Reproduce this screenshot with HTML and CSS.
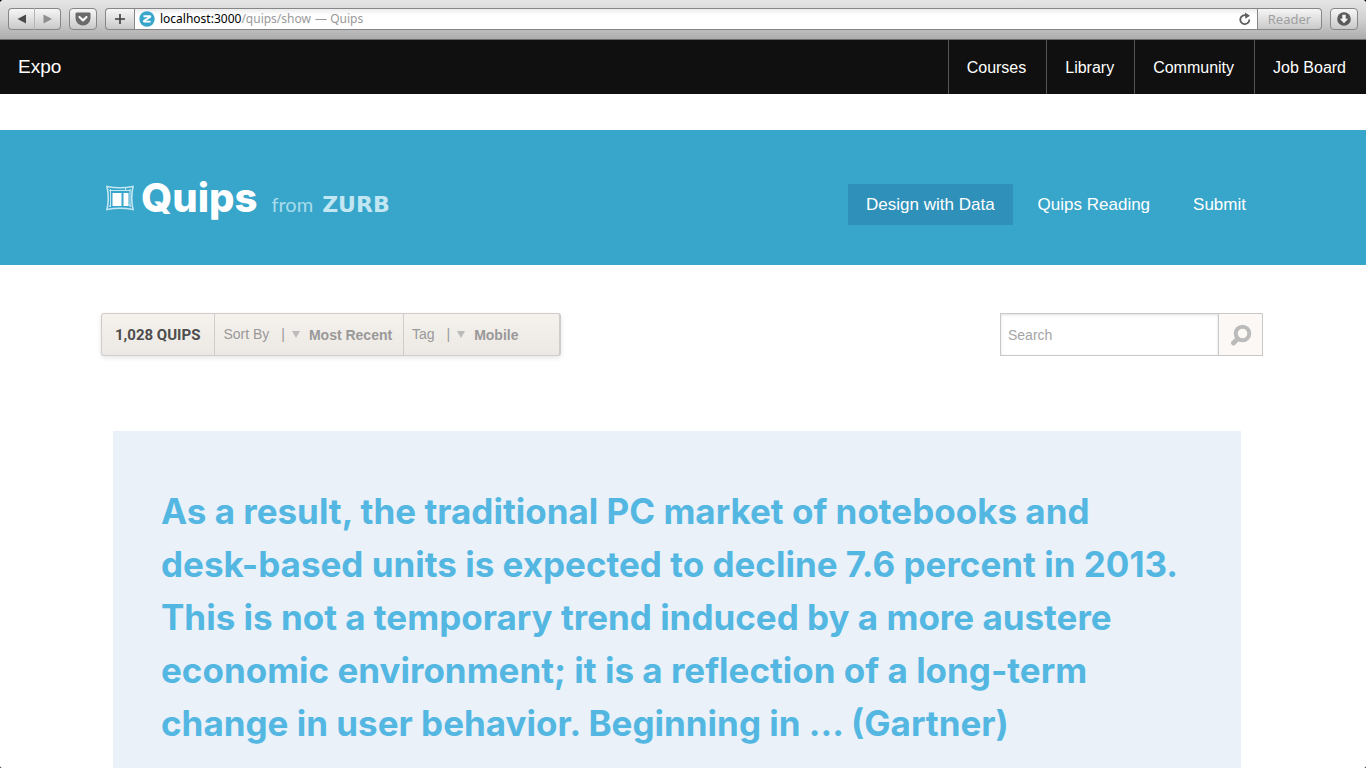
FILE: index.html
```html
<!DOCTYPE html>
<html lang="en">
<head>
<meta charset="utf-8">
<title>Quips</title>
<link rel="stylesheet" href="styles.css">
</head>
<body>
<div class="window">
  <div class="chrome">
    <div class="btn-group">
      <button class="chrome-btn nav-btn back" aria-label="Back"><svg width="10" height="10" viewBox="0 0 10 10"><path d="M0.5 5L9 0.5v9z" fill="#4a4a4a"/></svg></button>
      <button class="chrome-btn nav-btn forward" aria-label="Forward"><svg width="10" height="10" viewBox="0 0 10 10"><path d="M9 5L0.5 0.5v9z" fill="#8e8e8e"/></svg></button>
    </div>
    <button class="chrome-btn pocket" aria-label="Save to Pocket"><svg width="16" height="14" viewBox="0 0 16 14"><path d="M1.500 0.500h13l1 1v4.500a7.500 7.500 0 0 1-15 0V1.500z" fill="#6a6a6a"/><path d="M4.500 5L8 8.400 11.500 5" fill="none" stroke="#f4f4f4" stroke-width="2.200" stroke-linecap="round" stroke-linejoin="round"/></svg></button>
    <div class="address-bar">
      <button class="chrome-btn add" aria-label="Add bookmark"><svg width="12" height="12" viewBox="0 0 12 12"><path d="M6 1v10M1 6h10" stroke="#3c3c3c" stroke-width="1.600"/></svg></button>
      <div class="address">
        <svg width="16" height="16" viewBox="0 0 16 16"><circle cx="8" cy="8" r="7.700" fill="#38a6ca"/><path d="M4.500 5.200h6.200q1.200 0 .3.900L5.200 9.700q-.9.900.4.900h6" fill="none" stroke="#fff" stroke-width="1.900"/></svg>
        <p class="url"><span class="host">localhost:3000</span>/quips/show <span class="page-title">— Quips</span></p>
        <button class="reload" aria-label="Reload"><svg width="12" height="14" viewBox="0 0 12 14"><path d="M10.300 7.500A4.500 4.500 0 1 1 7.500 3.500" fill="none" stroke="#5e5e5e" stroke-width="1.800"/><path d="M6 0.500L11 3.800 6.300 6.800z" fill="#5e5e5e"/></svg></button>
      </div>
      <button class="chrome-btn reader" disabled>Reader</button>
    </div>
    <button class="chrome-btn downloads" aria-label="Downloads"><svg width="14" height="14" viewBox="0 0 14 14"><circle cx="7" cy="7" r="6.800" fill="#5a5a5a"/><path d="M5.300 2.700h3.400v4h2.500L7 11.300 2.800 6.700h2.500z" fill="#f2f2f2"/></svg></button>
  </div>

  <nav class="topbar">
    <a class="brand" href="#">Expo</a>
    <ul class="top-links">
      <li><a href="#">Courses</a></li>
      <li><a href="#">Library</a></li>
      <li><a href="#">Community</a></li>
      <li><a href="#">Job Board</a></li>
    </ul>
  </nav>

  <header class="banner">
    <a class="logo" href="#">
      <svg class="logo-mark" width="28" height="26" viewBox="0 0 28 26"><g fill="none" stroke="#c3e7f2"><path d="M1 1.500Q14 4 27 1.500Q24.500 13 27 24.500Q14 22 1 24.500Q3.500 13 1 1.500z" stroke-width="1.600"/><path d="M3 5.500h22M4.500 4v18M24 4v18M3 22l2-3M25 22l-2-3M19.500 3v3" stroke-width="1"/></g><path d="M6.500 8h9v13h-9zM17.500 8h5v13h-5z" fill="#fff"/></svg>
      <span class="logo-name">Quips</span>
      <span class="logo-from">from</span>
      <span class="logo-zurb">ZURB</span>
    </a>
    <nav class="sections">
      <a class="current" href="#">Design with Data</a>
      <a href="#">Quips Reading</a>
      <a href="#">Submit</a>
    </nav>
  </header>

  <main>
    <div class="tools">
      <div class="filters">
        <strong class="count">1,028 QUIPS</strong>
        <div class="filter sort">
          <label for="sort">Sort By</label>
          <span class="bar">|</span>
          <i class="caret"></i>
          <select id="sort"><option>Most Recent</option></select>
        </div>
        <div class="filter">
          <label for="tag">Tag</label>
          <span class="bar">|</span>
          <i class="caret"></i>
          <select id="tag"><option>Mobile</option></select>
        </div>
      </div>
      <form class="search">
        <input type="search" placeholder="Search" aria-label="Search quips">
        <button type="submit" aria-label="Search"><svg width="22" height="22" viewBox="0 0 22 22"><circle cx="12.500" cy="9.500" r="6.800" fill="none" stroke="#bbb" stroke-width="4"/><path d="M7.500 15L3.500 19" stroke="#bbb" stroke-width="4.800" stroke-linecap="round"/></svg></button>
      </form>
    </div>
    <blockquote class="quip">As a result, the traditional PC market of notebooks and<br>desk-based units is expected to decline 7.6 percent in 2013.<br>This is not a temporary trend induced by a more austere<br>economic environment; it is a reflection of a long-term<br>change in user behavior. Beginning in ... (Gartner)</blockquote>
  </main>
</div>
</body>
</html>
```
FILE: styles.css
```css
* { box-sizing: border-box; }

html { background: #000; }

body {
  margin: 0;
  font-family: "Liberation Sans", Arial, sans-serif;
}

a { color: inherit; text-decoration: none; }

button, input, select { font: inherit; margin: 0; }

svg { display: block; flex: none; }

.window {
  display: flex;
  flex-direction: column;
  min-height: 100vh;
  background: #fff;
  border-radius: 4px 4px 2px 2px;
  overflow: hidden;
}

/* Browser toolbar */
.chrome {
  display: flex;
  align-items: center;
  gap: 8px;
  height: 40px;
  padding: 0 8px 2px;
  background: linear-gradient(#e6e6e6, #d0d0d0 50%, #acacac);
  border-bottom: 1px solid #6c6c6c;
}

.btn-group, .address-bar { display: flex; }

.chrome-btn {
  display: flex;
  align-items: center;
  justify-content: center;
  height: 22px;
  padding: 0;
  border: 1px solid #868686;
  border-radius: 4px;
  background: linear-gradient(#f6f6f6, #c9c9c9);
}

.back { width: 26px; border-right: 0; border-radius: 4px 0 0 4px; }
.forward { width: 27px; border-left-color: #b4b4b4; border-radius: 0 4px 4px 0; }
.pocket, .downloads { width: 28px; }

.address-bar { flex: 1; }

.add { width: 29px; border-right: 0; border-radius: 4px 0 0 4px; }

.address {
  display: flex;
  flex: 1;
  align-items: center;
  gap: 5px;
  height: 22px;
  padding: 0 6px 0 4px;
  background: linear-gradient(#ececec, #fff 6px);
  border: 1px solid #868686;
}

.url {
  flex: 1;
  margin: 0;
  font: 12px/18px "Noto Sans", sans-serif;
  color: #999;
}

.host { color: #000; }
.page-title { margin-left: 1px; font-size: 12px; }

.reload { padding: 0; border: 0; background: none; }

.reader {
  width: 64px;
  border-left: 0;
  border-radius: 0 4px 4px 0;
  font: 13px/18px "Noto Sans", sans-serif;
  color: #a0a0a0;
}

/* Site navigation */
.topbar {
  display: flex;
  align-items: stretch;
  justify-content: space-between;
  height: 54px;
  background: #101010;
  color: #fff;
}

.brand { padding: 0 18px; font-size: 19px; line-height: 54px; }

.top-links { display: flex; margin: 0; padding: 0; list-style: none; }

.top-links a {
  display: block;
  padding: 1px 20px 0 18px;
  border-left: 1px solid #555;
  font-size: 16px;
  line-height: 53px;
}

/* Banner */
.banner {
  display: flex;
  align-items: center;
  justify-content: space-between;
  min-height: 135px;
  margin-top: 36px;
  padding: 14px 102px 0 106px;
  background: #38a6ca;
  color: #fff;
}

.logo { display: flex; align-items: baseline; padding-bottom: 14px; }
.logo-mark { align-self: center; margin-right: 7px; }

.logo-name { font: 800 40px/50px Inter, sans-serif; }

.logo-from {
  margin-left: 14px;
  font: 20px/24px Lato, sans-serif;
  color: #a9dcec;
}

.logo-zurb {
  margin-left: 9px;
  font: bold 22px/24px "DejaVu Sans", sans-serif;
  color: #c3e7f2;
}

.sections { display: flex; gap: 7px; }

.sections a {
  padding: 0 18px;
  font-size: 17px;
  line-height: 41px;
}

.sections .current { background: #2f91ba; }

/* Filters and search */
main { display: flex; flex: 1; flex-direction: column; padding-top: 48px; }

.tools {
  display: flex;
  align-items: center;
  justify-content: space-between;
  padding: 0 103px 0 101px;
  font-size: 14px;
  color: #999;
}

.filters {
  display: flex;
  width: 460px;
  height: 43px;
  border: 1px solid #d0ccca;
  border-right-width: 2px;
  border-radius: 3px;
  background: linear-gradient(#f5f2ee, #ece8e3);
  box-shadow: 0 2px 5px #0000001a;
  line-height: 43px;
}

.count {
  padding: 0 14px 0 13px;
  font-family: Roboto, sans-serif;
  font-size: 15px;
  color: #4d4d4d;
}

.filter {
  display: flex;
  align-items: center;
  padding: 0 8px;
  border-left: 1px solid #d0ccca;
}

.bar { margin: 0 7px 0 12px; }

.caret {
  margin-right: 9px;
  border: 4px solid transparent;
  border-top: 7px solid #bbb;
  border-bottom: 0;
}

.filter select {
  appearance: none;
  padding: 1px 2px 0 0;
  border: 0;
  background: none;
  font-weight: bold;
  color: #999;
}

.search { display: flex; }

.search input {
  width: 219px;
  height: 43px;
  padding: 0 7px;
  border: 1px solid #c8c8c8;
  border-radius: 0;
  background: #fff;
  box-shadow: inset 0 1px 3px #0000001f;
  appearance: none;
}

.search input::placeholder { color: #a5a5a5; }

.search button {
  display: flex;
  align-items: center;
  justify-content: center;
  width: 44px;
  padding: 0;
  border: 1px solid #c8c8c8;
  border-left: 0;
  background: #fcf8f5;
}

/* Quote */
.quip {
  flex: 1;
  margin: 75px 125px 0 113px;
  padding: 54px 48px 18px;
  background: #eaf1f9;
  font: 700 35px/53px Inter, sans-serif;
  color: #53b7e2;
}
```
